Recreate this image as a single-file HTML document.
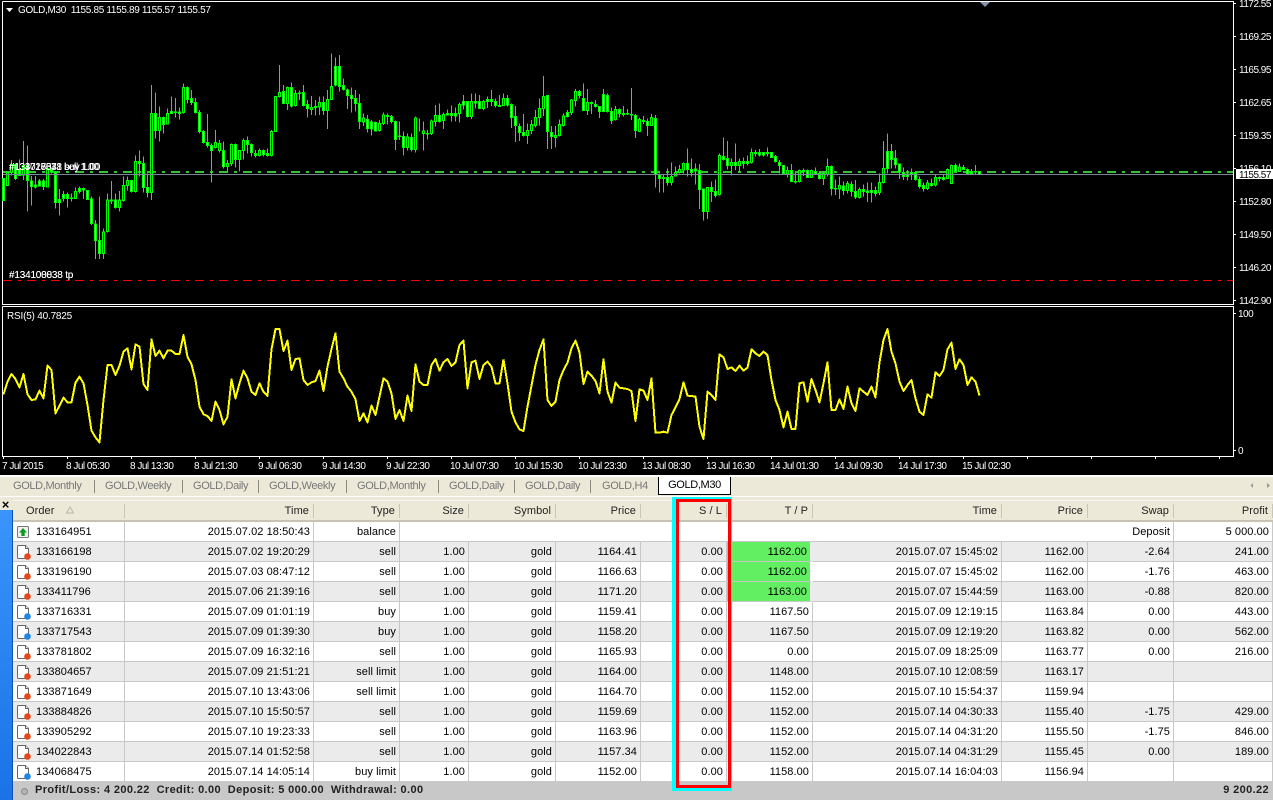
<!DOCTYPE html>
<html><head><meta charset="utf-8"><title>GOLD,M30</title>
<style>
html,body{margin:0;padding:0;width:1273px;height:800px;overflow:hidden;background:#000}
body{position:relative;font-family:"Liberation Sans",sans-serif;font-size:11px;color:#000}
svg{position:absolute;left:0;top:0;display:block}
.ct{font-family:"Liberation Sans",sans-serif;font-size:10px;letter-spacing:-.5px;fill:#fff}
.w{fill:none;stroke:#0f0;stroke-width:3}
.u{fill:#000;stroke:#0f0;stroke-width:3}
.d{fill:#fff;stroke:#0f0;stroke-width:3}
#tabs{position:absolute;left:0;top:475px;width:1273px;height:35px;background:#ece9d8;border-top:2px solid #fff;box-sizing:border-box}
#tabs span{position:absolute;top:1px;height:16px;line-height:16px;color:#777;white-space:nowrap;letter-spacing:-.35px}
#tabs i{position:absolute;top:3px;width:1px;height:13px;background:#8c8a7e}
#active{position:absolute;left:658px;top:0;width:73px;height:18px;background:#fff;border:1px solid #000;border-top:0;box-sizing:border-box;text-align:center;line-height:17px;color:#000;letter-spacing:-.35px}
#wl{position:absolute;left:0;top:496px;width:1273px;height:1px;background:#fff}
#x{position:absolute;left:1px;top:499px;width:9px;height:11px;font:bold 13px/11px "Liberation Sans",sans-serif;color:#000;text-align:center}
#side{position:absolute;left:0;top:510px;width:12px;height:290px;background:linear-gradient(#3a94fa,#1b72e6);border-right:1px solid #0d52b8}
table{position:absolute;left:13px;top:500px;width:1260px;border-collapse:separate;border-spacing:0;table-layout:fixed;background:#fff;letter-spacing:.07px}
th{height:22px;box-sizing:border-box;background:#ece9d8;font-weight:normal;text-align:right;padding:1px 5px 0 0;border-top:1px solid #f8f7f0;border-bottom:2px solid #c6c3b4;position:relative;color:#222}
th:after{content:"";position:absolute;right:0;top:3px;width:1px;height:14px;background:#c9c6b6;box-shadow:1px 0 0 #fff}
td{height:20px;box-sizing:border-box;text-align:right;padding:0 3px 0 0;border-right:1px solid #c8c8c8;border-bottom:1px solid #c8c8c8;white-space:nowrap;overflow:hidden}
tr.g td{background:#ebebeb}
td:first-child,th:first-child{text-align:left}
td:first-child{padding-left:23px;position:relative}
td:first-child svg{left:3px;top:2px}
th:first-child{padding-left:13px}
td.h{background:#62f062!important;border-right:3px solid #ebebeb;border-left:0}
tr.n td.h{border-right-color:#fff}
#status{position:absolute;left:13px;top:782px;width:1260px;height:18px;background:#c8c8c8;font-weight:bold;line-height:17px;color:#222;letter-spacing:.37px}
#status b{position:absolute;left:22px;top:0;white-space:pre}
#status u{position:absolute;right:4px;top:0;text-decoration:none}
#dot{position:absolute;left:8px;top:6px;width:7px;height:7px;border-radius:50%;background:#b4b4b4;border:1px solid #8a8a8a;box-sizing:border-box}
.r{position:absolute}
</style></head><body>

<svg width="1273" height="475" viewBox="0 0 1273 475">
<rect width="1273" height="475" fill="#000"/>
<g fill="none" stroke="#fff" stroke-width="1" shape-rendering="crispEdges">
<path d="M2.5 1.5H1233.5V304.5H2.5V1.5M2.5 306.5H1233.5V456.5H2.5V306.5"/>
<path d="M1233 3.5h3M1233 36.5h3M1233 69.5h3M1233 102.5h3M1233 135.5h3M1233 168.5h3M1233 201.5h3M1233 234.5h3M1233 267.5h3M1233 300.5h3M1233 313.5h3M1233 450.5h3"/>
<path d="M3.5 456v3M67.5 456v3M131.5 456v3M195.5 456v3M259.5 456v3M323.5 456v3M387.5 456v3M451.5 456v3M515.5 456v3M579.5 456v3M643.5 456v3M707.5 456v3M771.5 456v3M835.5 456v3M899.5 456v3M963.5 456v3M1027.5 456v3M1091.5 456v3M1155.5 456v3M1219.5 456v3"/>
</g>
<polygon points="980,2 990,2 985,7" fill="#8496a6"/>
<polygon points="6,8 13,8 9.5,12" fill="#fff"/>
<path d="M3 172H1233" stroke="#34c534" stroke-width="2" stroke-dasharray="9 6 3 6" fill="none" shape-rendering="crispEdges"/>
<path d="M3 280.5H1233" stroke="#f00" stroke-width="1" stroke-dasharray="9 6 3 6" fill="none" shape-rendering="crispEdges"/>

<g transform="scale(.33333) translate(.5,0)" shape-rendering="crispEdges">
<g>
<path class="w" d="M10 535V602M22 517V557M34 480V527M46 490V540M58 478V527M70 423V540M82 437V635M94 528V617M106 528V565M118 537V560M130 537V570M142 497V563M154 505V520M166 515V625M178 567V647M190 573V605M202 577V623M214 580V605M226 563V597M238 560V580M250 562V597M262 570V598M274 590V675M286 660V777M298 590V777M310 685V777M322 580V697M334 543V612M346 580V625M358 573V635M370 530V605M382 530V572M394 540V577M406 467V577M418 452V530M430 470V578M442 520V592M454 255V600M466 277V415M478 320V425M490 350V400M502 325V372M514 290V340M526 294V352M538 323V358M550 250V340M562 260V310M574 270V315M586 294V340M598 330V400M610 390V430M622 342V442M634 430V548M646 390V445M658 420V457M670 425V505M682 480V515M694 430V498M706 430V503M718 450V515M730 415V478M742 410V460M754 430V470M766 450V473M778 445V470M790 448V470M802 445V470M814 390V470M826 288V395M838 195V292M850 255V312M862 260V330M874 247V322M886 270V320M898 272V300M910 255V320M922 300V352M934 288V345M946 300V347M958 290V345M970 290V345M982 270V387M994 160V300M1006 173V260M1018 165V275M1030 235V272M1042 265V327M1054 262V337M1066 270V335M1078 282V387M1090 340V378M1102 345V398M1114 360V407M1126 365V395M1138 360V395M1150 338V375M1162 340V373M1174 345V370M1186 362V450M1198 365V420M1210 395V467M1222 400V452M1234 400V455M1246 350V458"/>
<path class="u" d="M19 517h6v40h-6zM31 493h6v24h-6zM67 497h6v28h-6zM139 505h6v56h-6zM223 574h6v22h-6zM307 696h6v65h-6zM319 600h6v95h-6zM355 600h6v23h-6zM367 556h6v46h-6zM379 541h6v15h-6zM403 484h6v91h-6zM451 340h6v238h-6zM475 352h6v40h-6zM499 340h6v32h-6zM547 262h6v76h-6zM643 427h6v16h-6zM655 430h6v22h-6zM679 490h6v10h-6zM691 433h6v57h-6zM715 451h6v28h-6zM727 421h6v30h-6zM775 451h6v15h-6zM811 394h6v73h-6zM823 289h6v106h-6zM835 277h6v13h-6zM859 262h6v49h-6zM883 280h6v36h-6zM931 322h6v6h-6zM955 307h6v14h-6zM979 298h6v34h-6zM991 259h6v39h-6zM1087 354h6v12h-6zM1135 370h6v22h-6zM1147 345h6v25h-6zM1219 411h6v32h-6zM1243 354h6v94h-6z"/>
<path class="d" d="M7 535h6v67h-6zM43 493h6v42h-6zM55 508h6v19h-6zM79 497h6v44h-6zM91 543h6v17h-6zM103 555h6v6h-6zM115 543h6v15h-6zM127 543h6v17h-6zM151 508h6v8h-6zM163 517h6v90h-6zM175 598h6v10h-6zM187 583h6v13h-6zM199 583h6v13h-6zM211 594h6v2h-6zM235 565h6v9h-6zM247 565h6v5h-6zM259 571h6v27h-6zM271 597h6v74h-6zM283 672h6v49h-6zM295 721h6v40h-6zM331 600h6v3h-6zM343 600h6v23h-6zM391 541h6v34h-6zM415 484h6v7h-6zM427 490h6v73h-6zM439 562h6v16h-6zM463 340h6v52h-6zM487 352h6v22h-6zM511 334h6v7h-6zM523 336h6v2h-6zM535 336h6v5h-6zM559 262h6v36h-6zM571 295h6v13h-6zM583 308h6v30h-6zM595 337h6v58h-6zM607 394h6v34h-6zM619 427h6v10h-6zM631 437h6v15h-6zM667 451h6v49h-6zM703 433h6v45h-6zM739 421h6v12h-6zM751 433h6v25h-6zM763 460h6v7h-6zM787 451h6v13h-6zM799 460h6v6h-6zM847 275h6v36h-6zM871 262h6v56h-6zM895 279h6v2h-6zM907 277h6v40h-6zM919 313h6v12h-6zM943 320h6v3h-6zM967 307h6v25h-6zM1003 199h6v56h-6zM1015 199h6v60h-6zM1027 256h6v13h-6zM1039 270h6v17h-6zM1051 286h6v10h-6zM1063 295h6v16h-6zM1075 311h6v53h-6zM1099 359h6v27h-6zM1111 366h6v21h-6zM1123 367h6v26h-6zM1159 346h6v3h-6zM1171 349h6v15h-6zM1183 364h6v54h-6zM1195 408h6v2h-6zM1207 409h6v33h-6zM1231 412h6v36h-6z"/>
</g>
<g transform="translate(1260,0)">
<path class="w" d="M-2 355V395M10 365V452M22 390V418M34 358V405M46 315V380M58 310V367M70 337V387M82 328V347M94 316V365M106 322V365M118 307V368M130 285V328M142 303V352M154 280V357M166 280V325M178 285V327M190 300V330M202 290V324M214 270V318M226 295V322M238 285V320M250 280V317M262 285V320M274 310V384M286 318V426M298 370V423M310 342V410M322 370V432M334 360V402M346 330V382M358 296V376M370 228V348M382 285V447M394 378V447M406 378V442M418 358V410M430 340V380M442 330V352M454 297V345M466 267V320M478 270V296M490 250V332M502 267V345M514 305V342M526 300V322M538 318V354M550 267V336M562 280V337M574 323V372M586 318V362M598 326V352M610 318V350M622 327V345M634 264V360M646 342V414M658 352V396M670 348V372M682 355V408M694 342V377M706 345V563M718 520V578M730 525V578M742 505V557M754 487V557M766 500V530M778 495V520M790 487V520M802 445V530M814 475V530M826 490V553M838 492V627M850 565V662M862 562V657M874 545V606M886 538V592M898 460V587M910 412V482M922 423V508M934 475V527M946 430V510M958 475V515M970 472V505M982 467V497M994 445V490M1006 450V470M1018 447V470M1030 457V470M1042 442V470M1054 457V474M1066 465V488M1078 480V520M1090 495V520M1102 500V533M1114 492V546M1126 518V550M1138 508V547M1150 505V528M1162 508V533M1174 508V533M1186 502V524M1198 518V538M1210 515V555M1222 475V530M1234 497V587M1246 538V585M1258 530V597"/>
<path class="u" d="M7 393h6v8h-6zM31 363h6v38h-6zM43 346h6v19h-6zM67 344h6v18h-6zM115 313h6v28h-6zM151 305h6v45h-6zM187 304h6v22h-6zM247 295h6v22h-6zM319 391h6v16h-6zM331 373h6v19h-6zM343 352h6v24h-6zM355 325h6v27h-6zM367 289h6v37h-6zM403 406h6v7h-6zM415 373h6v34h-6zM427 348h6v29h-6zM451 300h6v38h-6zM463 274h6v28h-6zM499 307h6v24h-6zM583 329h6v30h-6zM655 358h6v36h-6zM691 352h6v25h-6zM751 529h6v19h-6zM763 517h6v11h-6zM775 508h6v9h-6zM787 490h6v20h-6zM859 562h6v73h-6zM895 466h6v118h-6zM931 487h6v10h-6zM955 484h6v13h-6zM991 457h6v31h-6zM1099 512h6v10h-6zM1135 512h6v33h-6zM1171 511h6v22h-6zM1207 520h6v16h-6zM1219 499h6v25h-6zM1255 557h6v10h-6z"/>
<path class="d" d="M19 400h6v2h-6zM55 346h6v19h-6zM79 340h6v5h-6zM91 340h6v7h-6zM103 340h6v8h-6zM127 304h6v11h-6zM139 304h6v46h-6zM163 304h6v5h-6zM175 304h6v22h-6zM199 298h6v6h-6zM211 298h6v6h-6zM223 304h6v13h-6zM235 317h6v2h-6zM259 295h6v20h-6zM271 313h6v39h-6zM283 350h6v27h-6zM295 379h6v19h-6zM307 397h6v10h-6zM379 286h6v109h-6zM391 397h6v13h-6zM439 337h6v13h-6zM475 274h6v13h-6zM487 295h6v36h-6zM511 307h6v3h-6zM523 313h6v7h-6zM535 319h6v16h-6zM547 283h6v52h-6zM559 286h6v49h-6zM571 334h6v27h-6zM595 328h6v12h-6zM607 340h6v4h-6zM619 340h6v2h-6zM631 343h6v2h-6zM643 346h6v46h-6zM667 361h6v3h-6zM679 364h6v12h-6zM703 355h6v169h-6zM715 525h6v11h-6zM727 532h6v4h-6zM739 532h6v16h-6zM799 490h6v19h-6zM811 508h6v9h-6zM823 507h6v6h-6zM835 511h6v58h-6zM847 567h6v68h-6zM871 562h6v13h-6zM883 575h6v12h-6zM907 470h6v9h-6zM919 476h6v21h-6zM943 487h6v10h-6zM967 484h6v7h-6zM979 484h6v7h-6zM1003 458h6v3h-6zM1015 457h6v8h-6zM1027 458h6v7h-6zM1039 458h6v2h-6zM1051 458h6v15h-6zM1063 469h6v16h-6zM1075 487h6v10h-6zM1087 497h6v23h-6zM1111 512h6v33h-6zM1123 544h6v2h-6zM1147 512h6v3h-6zM1159 511h6v22h-6zM1183 515h6v6h-6zM1195 520h6v16h-6zM1231 499h6v67h-6zM1243 565h6v2h-6z"/>
</g>
<g transform="translate(2520,0)">
<path class="w" d="M10 545V585M22 543V580M34 545V590M46 540V597M58 563V595M70 553V590M82 547V606M94 548V608M106 560V590M118 520V585M130 423V550M142 400V520M154 432V505M166 450V505M178 490V537M190 502V540M202 510V542M214 505V540M226 515V542M238 530V565M250 547V575M262 540V570M274 535V560M286 525V560M298 530V545M310 525V542M322 505V535M334 493V552M346 490V518M358 490V516M370 495V510M382 505V522M394 507V522M406 495V522M418 513V523"/>
<path class="u" d="M19 550h6v22h-6zM55 568h6v25h-6zM115 547h6v31h-6zM127 505h6v42h-6zM259 549h6v17h-6zM283 532h6v23h-6zM319 508h6v27h-6zM331 496h6v54h-6zM355 501h6v13h-6z"/>
<path class="d" d="M7 558h6v14h-6zM31 553h6v22h-6zM43 575h6v16h-6zM67 569h6v6h-6zM79 573h6v4h-6zM91 572h6v6h-6zM103 571h6v9h-6zM139 454h6v51h-6zM151 454h6v25h-6zM163 475h6v18h-6zM175 492h6v24h-6zM187 517h6v13h-6zM199 522h6v8h-6zM211 517h6v7h-6zM223 518h6v20h-6zM235 538h6v22h-6zM247 556h6v10h-6zM271 550h6v6h-6zM295 532h6v4h-6zM307 532h6v6h-6zM343 496h6v19h-6zM367 502h6v6h-6zM379 508h6v12h-6zM391 514h6v6h-6zM403 514h6v2h-6zM415 515h6v8h-6z"/>
</g>
</g>
<path d="M3 174.5H1233" stroke="#778899" stroke-width="1" fill="none" shape-rendering="crispEdges"/>

<g transform="translate(0,300) scale(.33333) translate(.5,0)" fill="none" stroke="#ff0" stroke-width="6" shape-rendering="crispEdges" stroke-linejoin="round">
<polyline points="10,283 22,245 34,222 46,237 58,262 70,222 82,283 94,300 106,298 118,272 130,295 142,197 154,210 166,340 178,317 190,293 202,307 214,307 226,248 238,230 250,250 262,315 274,392 286,412 298,427 310,300 322,195 334,195 346,225 358,197 370,155 382,145 394,208 406,133 418,140 430,252 442,270 454,118 466,168 478,152 490,175 502,152 514,152 526,162 538,162 550,105 562,170 574,193 586,240 598,320 610,343 622,348 634,363 646,305 658,330 670,373 682,350 694,238 706,295 718,250 730,212 742,235 754,275 766,285 778,250 790,275 802,288 814,148 826,87 838,87 850,153 862,122 874,210 886,177 898,175 910,240 922,255 934,247 946,243 958,212 970,273 982,200 994,147 1006,100 1018,215 1030,235 1042,260 1054,275 1066,298 1078,363 1090,340 1102,367 1114,317 1126,345 1138,290 1150,235 1162,245 1174,280 1186,357 1198,330 1210,363 1222,287 1234,333 1246,193 1258,245 1270,255 1282,255 1294,195 1306,177 1318,212 1330,187 1342,177 1354,198 1366,187 1378,135 1390,122 1402,265 1414,187 1426,182 1438,237 1450,195 1462,185 1474,200 1486,250 1498,250 1510,178"/>
<polyline transform="translate(1500,0)" points="10,178 22,250 34,335 46,367 58,388 70,393 82,320 94,257 106,195 118,150 130,118 142,300 154,318 166,305 178,240 190,210 202,188 214,145 226,122 238,157 250,252 262,215 274,227 286,243 298,280 310,178 322,275 334,308 346,248 358,263 370,265 382,267 394,273 406,363 418,268 430,272 442,300 454,235 466,398 478,398 490,395 502,398 514,345 526,322 538,297 550,247 562,287 574,288 586,290 598,380 610,417 622,275 634,285 646,300 658,163 670,172 682,207 694,202 706,213 718,197 730,212 742,203 754,148 766,160 778,168 790,155 802,165 814,240 826,300 838,330 850,382 862,335 874,387 886,387 898,250 910,247 922,305 934,237 946,270 958,307 970,250 982,187 994,330 1006,330 1018,298 1030,327 1042,260 1054,310 1066,333 1078,265 1090,275 1102,285 1114,260 1126,292 1138,187 1150,120 1162,87 1174,155 1186,190 1198,245 1210,273 1222,255 1234,240 1246,295 1258,335 1270,345 1282,283 1294,293 1306,217 1318,228 1330,210 1342,148 1354,128 1366,207 1378,178 1390,195 1402,255 1414,232 1426,245 1438,287"/>
</g>

<text class="ct" x="18" y="13" style="letter-spacing:-.33px;white-space:pre">GOLD,M30  1155.85 1155.89 1155.57 1155.57</text>
<text class="ct" x="9" y="170" style="letter-spacing:-.3px">#133716331 buy 1.00</text>
<text class="ct" x="9" y="170" style="letter-spacing:-.3px">#133717543 buy 1.00</text>
<text class="ct" x="9" y="170" style="letter-spacing:-.3px">#134028078 sell 1.00</text>
<text class="ct" x="9" y="278" style="letter-spacing:-.2px">#134100838 tp</text>
<text class="ct" x="9" y="278" style="letter-spacing:-.2px">#134108038 tp</text>
<text class="ct" x="7" y="319" style="letter-spacing:-.2px">RSI(5) 40.7825</text>

<g class="ct">
<text x="1239" y="7">1172.55</text><text x="1239" y="40">1169.25</text><text x="1239" y="73">1165.95</text><text x="1239" y="106">1162.65</text><text x="1239" y="139">1159.35</text><text x="1239" y="172">1156.10</text><text x="1239" y="205">1152.80</text><text x="1239" y="238">1149.50</text><text x="1239" y="271">1146.20</text><text x="1239" y="304">1142.90</text>
<text x="1238" y="317">100</text><text x="1238" y="454">0</text>
</g>
<rect x="1236" y="169" width="37" height="10" fill="#fff"/>
<text class="ct" x="1239" y="178" style="fill:#000">1155.57</text>

<g class="ct">
<text x="2" y="469">7 Jul 2015</text><text x="66" y="469">8 Jul 05:30</text><text x="130" y="469">8 Jul 13:30</text><text x="194" y="469">8 Jul 21:30</text><text x="258" y="469">9 Jul 06:30</text><text x="322" y="469">9 Jul 14:30</text><text x="386" y="469">9 Jul 22:30</text><text x="450" y="469">10 Jul 07:30</text><text x="514" y="469">10 Jul 15:30</text><text x="578" y="469">10 Jul 23:30</text><text x="642" y="469">13 Jul 08:30</text><text x="706" y="469">13 Jul 16:30</text><text x="770" y="469">14 Jul 01:30</text><text x="834" y="469">14 Jul 09:30</text><text x="898" y="469">14 Jul 17:30</text><text x="962" y="469">15 Jul 02:30</text>
</g>
</svg>

<div id="tabs">
<span style="left:13px">GOLD,Monthly</span><i style="left:94px"></i>
<span style="left:105px">GOLD,Weekly</span><i style="left:182px"></i>
<span style="left:193px">GOLD,Daily</span><i style="left:258px"></i>
<span style="left:269px">GOLD,Weekly</span><i style="left:346px"></i>
<span style="left:357px">GOLD,Monthly</span><i style="left:438px"></i>
<span style="left:449px">GOLD,Daily</span><i style="left:514px"></i>
<span style="left:525px">GOLD,Daily</span><i style="left:590px"></i>
<span style="left:602px">GOLD,H4</span>
<div id="active">GOLD,M30</div>
</div>
<div id="wl"></div>
<svg width="1273" height="500" style="pointer-events:none"><polygon points="1253,483 1250.5,485.5 1253,488" fill="#999"/><polygon points="1267,483 1270,485.5 1267,488" fill="#999"/></svg>
<div id="x">×</div>
<div id="side"></div>

<svg width="0" height="0" style="position:absolute">
<symbol id="ds" viewBox="0 0 16 16"><path d="M1.5 2.5Q1.5 1.5 2.5 1.5H9.5L12.5 4.5V13.5Q12.5 14.5 11.5 14.5H2.5Q1.5 14.5 1.5 13.5Z" fill="#fff" stroke="#666"/><path d="M9.5 1.5V4.5H12.5" fill="#eee" stroke="#666"/><circle cx="11.5" cy="12.5" r="3.3" fill="#e2481c"/></symbol>
<symbol id="db" viewBox="0 0 16 16"><path d="M1.5 2.5Q1.5 1.5 2.5 1.5H9.5L12.5 4.5V13.5Q12.5 14.5 11.5 14.5H2.5Q1.5 14.5 1.5 13.5Z" fill="#fff" stroke="#666"/><path d="M9.5 1.5V4.5H12.5" fill="#eee" stroke="#666"/><circle cx="11.5" cy="12.5" r="3.3" fill="#1c86e2"/></symbol>
<symbol id="bl" viewBox="0 0 16 16"><rect x="1.5" y="2.5" width="11" height="11" rx="1" fill="#f4f4ec" stroke="#777"/><path d="M7 4L11 8.5H8.7V12H5.3V8.5H3Z" fill="#0a9a2a"/></symbol>
</svg>

<table>
<colgroup><col style="width:112px"><col style="width:189px"><col style="width:86px"><col style="width:69px"><col style="width:87px"><col style="width:85px"><col style="width:86px"><col style="width:86px"><col style="width:189px"><col style="width:86px"><col style="width:86px"><col style="width:99px"></colgroup>
<tr><th>Order</th><th>Time</th><th>Type</th><th>Size</th><th>Symbol</th><th>Price</th><th>S / L</th><th>T / P</th><th>Time</th><th>Price</th><th>Swap</th><th>Profit</th></tr>
<tr class="n"><td><svg width="16" height="16"><use href="#bl"/></svg>133164951</td><td>2015.07.02 18:50:43</td><td>balance</td><td colspan="8">Deposit</td><td>5 000.00</td></tr>
<tr class="g"><td><svg width="16" height="16"><use href="#ds"/></svg>133166198</td><td>2015.07.02 19:20:29</td><td>sell</td><td>1.00</td><td>gold</td><td>1164.41</td><td>0.00</td><td class="h">1162.00</td><td>2015.07.07 15:45:02</td><td>1162.00</td><td>-2.64</td><td>241.00</td></tr>
<tr class="n"><td><svg width="16" height="16"><use href="#ds"/></svg>133196190</td><td>2015.07.03 08:47:12</td><td>sell</td><td>1.00</td><td>gold</td><td>1166.63</td><td>0.00</td><td class="h">1162.00</td><td>2015.07.07 15:45:02</td><td>1162.00</td><td>-1.76</td><td>463.00</td></tr>
<tr class="g"><td><svg width="16" height="16"><use href="#ds"/></svg>133411796</td><td>2015.07.06 21:39:16</td><td>sell</td><td>1.00</td><td>gold</td><td>1171.20</td><td>0.00</td><td class="h">1163.00</td><td>2015.07.07 15:44:59</td><td>1163.00</td><td>-0.88</td><td>820.00</td></tr>
<tr class="n"><td><svg width="16" height="16"><use href="#db"/></svg>133716331</td><td>2015.07.09 01:01:19</td><td>buy</td><td>1.00</td><td>gold</td><td>1159.41</td><td>0.00</td><td>1167.50</td><td>2015.07.09 12:19:15</td><td>1163.84</td><td>0.00</td><td>443.00</td></tr>
<tr class="g"><td><svg width="16" height="16"><use href="#db"/></svg>133717543</td><td>2015.07.09 01:39:30</td><td>buy</td><td>1.00</td><td>gold</td><td>1158.20</td><td>0.00</td><td>1167.50</td><td>2015.07.09 12:19:20</td><td>1163.82</td><td>0.00</td><td>562.00</td></tr>
<tr class="n"><td><svg width="16" height="16"><use href="#ds"/></svg>133781802</td><td>2015.07.09 16:32:16</td><td>sell</td><td>1.00</td><td>gold</td><td>1165.93</td><td>0.00</td><td>0.00</td><td>2015.07.09 18:25:09</td><td>1163.77</td><td>0.00</td><td>216.00</td></tr>
<tr class="g"><td><svg width="16" height="16"><use href="#ds"/></svg>133804657</td><td>2015.07.09 21:51:21</td><td>sell limit</td><td>1.00</td><td>gold</td><td>1164.00</td><td>0.00</td><td>1148.00</td><td>2015.07.10 12:08:59</td><td>1163.17</td><td></td><td></td></tr>
<tr class="n"><td><svg width="16" height="16"><use href="#ds"/></svg>133871649</td><td>2015.07.10 13:43:06</td><td>sell limit</td><td>1.00</td><td>gold</td><td>1164.70</td><td>0.00</td><td>1152.00</td><td>2015.07.10 15:54:37</td><td>1159.94</td><td></td><td></td></tr>
<tr class="g"><td><svg width="16" height="16"><use href="#ds"/></svg>133884826</td><td>2015.07.10 15:50:57</td><td>sell</td><td>1.00</td><td>gold</td><td>1159.69</td><td>0.00</td><td>1152.00</td><td>2015.07.14 04:30:33</td><td>1155.40</td><td>-1.75</td><td>429.00</td></tr>
<tr class="n"><td><svg width="16" height="16"><use href="#ds"/></svg>133905292</td><td>2015.07.10 19:23:33</td><td>sell</td><td>1.00</td><td>gold</td><td>1163.96</td><td>0.00</td><td>1152.00</td><td>2015.07.14 04:31:20</td><td>1155.50</td><td>-1.75</td><td>846.00</td></tr>
<tr class="g"><td><svg width="16" height="16"><use href="#ds"/></svg>134022843</td><td>2015.07.14 01:52:58</td><td>sell</td><td>1.00</td><td>gold</td><td>1157.34</td><td>0.00</td><td>1152.00</td><td>2015.07.14 04:31:29</td><td>1155.45</td><td>0.00</td><td>189.00</td></tr>
<tr class="n"><td><svg width="16" height="16"><use href="#db"/></svg>134068475</td><td>2015.07.14 14:05:14</td><td>buy limit</td><td>1.00</td><td>gold</td><td>1152.00</td><td>0.00</td><td>1158.00</td><td>2015.07.14 16:04:03</td><td>1156.94</td><td></td><td></td></tr>
</table>

<svg width="1273" height="530" style="top:0;pointer-events:none"><polygon points="70,507 66.5,513 73.5,513" fill="none" stroke="#bbb8a8"/></svg>

<div id="status"><div id="dot"></div><b>Profit/Loss: 4 200.22  Credit: 0.00  Deposit: 5 000.00  Withdrawal: 0.00</b><u>9 200.22</u></div>

<div class="r" style="left:672px;top:497px;width:60px;height:294px;box-sizing:border-box;border:3px solid #0ff;border-left-width:4px;border-right-width:2px"></div>
<div class="r" style="left:676px;top:499px;width:55px;height:289px;box-sizing:border-box;border:3px solid #f00"></div>
</body></html>
